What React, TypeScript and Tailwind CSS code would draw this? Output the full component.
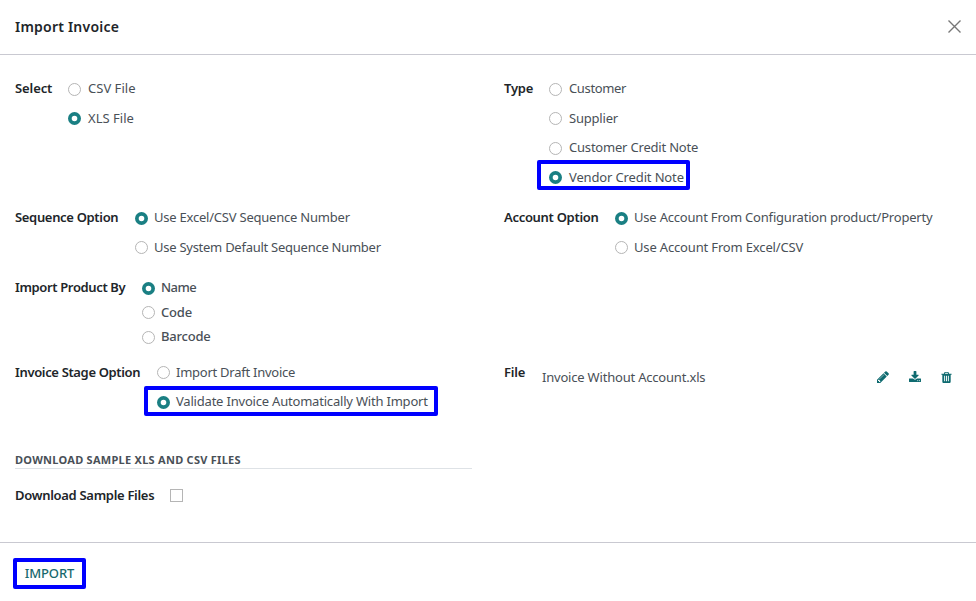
import React from "react";

type Option = { text: string; h: string; on?: boolean; low?: boolean; bold?: boolean; near?: boolean; mark?: string; track?: string };

function Radio({ text, h, on, low, bold, near, mark, track }: Option) {
  return (
    <div className={"relative flex items-start whitespace-nowrap " + h}>
      <span
        className={
          "block h-[13px] w-[13px] shrink-0 rounded-full bg-white " +
          (low ? "mt-[5px] " : "mt-[4px] ") +
          (on ? "shadow-[inset_0_0_0_3.7px_#1a7f83]" : "border border-[#b5b5b5]")
        }
      />
      <span className={(near ? "ml-[6px] " : "ml-[7px] ") + (bold ? "font-[550] " : "") + (track ?? "tracking-[-0.2px]")}>{text}</span>
      {mark && <span className={"absolute rounded-[2px] border-4 border-[#0000ff] " + mark} />}
    </div>
  );
}

function Field({ label, w, track, options }: { label: string; w: string; track?: string; options: Option[] }) {
  return (
    <div className="flex">
      <Label text={label} w={w} track={track} />
      <div>
        {options.map((o) => (
          <Radio key={o.text} {...o} />
        ))}
      </div>
    </div>
  );
}

function Label({ text, w, track }: { text: string; w: string; track?: string }) {
  return (
    <div className={"shrink-0 whitespace-nowrap font-semibold text-[#212529] " + w + " " + (track ?? "tracking-[-0.2px]")}>{text}</div>
  );
}

function Icon({ d, vb, w }: { d: string; vb: string; w: string }) {
  return (
    <svg viewBox={vb} className={"fill-[#0f6b70] " + w}>
      <path d={d} />
    </svg>
  );
}

const pencil =
  "M363 1536l91-91-235-235-91 91v107h128v128h107zm523-928q0-22-22-22-10 0-17 7l-542 542q-7 7-7 17 0 22 22 22 10 0 17-7l542-542q7-7 7-17zm-54-192l416 416-832 832h-416v-416zm683 96q0 53-37 90l-166 166-416-416 166-165q36-38 90-38 53 0 91 38l235 234q37 39 37 91z";
const download =
  "M1280 1344q0-26-19-45t-45-19-45 19-19 45 19 45 45 19 45-19 19-45zm256 0q0-26-19-45t-45-19-45 19-19 45 19 45 45 19 45-19 19-45zm128-224v320q0 40-28 68t-68 28h-1472q-40 0-68-28t-28-68v-320q0-40 28-68t68-28h465l135 136q58 56 136 56t136-56l136-136h464q40 0 68 28t28 68zm-325-569q17 41-14 70l-448 448q-18 19-45 19t-45-19l-448-448q-31-29-14-70 17-39 59-39h256v-448q0-26 19-45t45-19h256q26 0 45 19t19 45v448h256q42 0 59 39z";
const trash =
  "M512 1376v-704q0-14-9-23t-23-9h-64q-14 0-23 9t-9 23v704q0 14 9 23t23 9h64q14 0 23-9t9-23zm256 0v-704q0-14-9-23t-23-9h-64q-14 0-23 9t-9 23v704q0 14 9 23t23 9h64q14 0 23-9t9-23zm256 0v-704q0-14-9-23t-23-9h-64q-14 0-23 9t-9 23v704q0 14 9 23t23 9h64q14 0 23-9t9-23zm-544-992h448l-48-117q-7-9-17-11h-317q-10 2-17 11zm928 32v64q0 14-9 23t-23 9h-96v948q0 83-47 143.500t-113 60.500h-832q-66 0-113-58.500t-47-141.500v-952h-96q-14 0-23-9t-9-23v-64q0-14 9-23t23-9h309l70-167q15-37 54-63t79-26h320q40 0 79 26t54 63l70 167h309q14 0 23 9t9 23z";

export default function App() {
  return (
    <div className="flex h-[601px] w-[976px] flex-col overflow-hidden bg-white font-['Noto_Sans',sans-serif] text-[13px] leading-5 text-[#495057]">
      <header className="flex h-[55px] shrink-0 items-center justify-between border-b border-[#c9c9d1] px-[15px] pb-px">
        <h1 className="text-[14px] font-semibold tracking-[0.22px] text-[#212529]">Import Invoice</h1>
        <svg viewBox="0 0 13 13" className="h-[13px] w-[13px] stroke-[#777777]" strokeWidth="1.4" fill="none">
          <path d="M.5.5l12 12M12.500.5l-12 12" />
        </svg>
      </header>

      <main className="h-[487px] shrink-0 px-[15px] pt-[23px]">
        <div className="grid h-[129px] grid-cols-[489px_1fr]">
          <Field label="Select" w="w-[53px]" track="tracking-[-0.1px]" options={[
            { text: "CSV File", h: "h-[30px]", low: true, track: "tracking-[0.02px]" },
            { text: "XLS File", h: "h-[30px]", on: true, track: "tracking-[0.02px]" },
          ]} />
          <Field label="Type" w="w-[45px]" options={[
            { text: "Customer", h: "h-[30px]", low: true, track: "tracking-[-0.35px]" },
            { text: "Supplier", h: "h-[29px]" },
            { text: "Customer Credit Note", h: "h-[30px]", low: true },
            { text: "Vendor Credit Note", h: "h-[30px]", on: true, track: "tracking-[-0.14px]", mark: "-top-[7px] -left-[12px] h-[30px] w-[153px]" },
          ]} />
        </div>
        <div className="grid h-[70px] grid-cols-[489px_1fr]">
          <Field label="Sequence Option" w="w-[120px]" track="tracking-[-0.33px]" options={[
            { text: "Use Excel/CSV Sequence Number", h: "h-[30px]", on: true, low: true, near: true, track: "tracking-[-0.22px]" },
            { text: "Use System Default Sequence Number", h: "h-[30px]", near: true, track: "tracking-[-0.26px]" },
          ]} />
          <Field label="Account Option" w="w-[111px]" track="tracking-[-0.3px]" options={[
            { text: "Use Account From Configuration product/Property", h: "h-[30px]", on: true, low: true, near: true },
            { text: "Use Account From Excel/CSV", h: "h-[30px]", near: true, track: "tracking-[-0.16px]" },
          ]} />
        </div>
        <div className="h-[85px]">
          <Field label="Import Product By" w="w-[127px]" track="tracking-[-0.36px]" options={[
            { text: "Name", h: "h-[25px]", on: true, low: true, bold: true, near: true, track: "tracking-[-0.5px]" },
            { text: "Code", h: "h-[24px]", bold: true, near: true },
            { text: "Barcode", h: "h-[25px]", low: true, bold: true, near: true },
          ]} />
        </div>
        <div className="grid h-[88px] grid-cols-[489px_1fr]">
          <Field label="Invoice Stage Option" w="w-[142px]" track="tracking-[-0.35px]" options={[
            { text: "Import Draft Invoice", h: "h-[29px]", near: true, track: "tracking-[-0.25px]" },
            { text: "Validate Invoice Automatically With Import", h: "h-[30px]", on: true, low: true, near: true, mark: "-top-[5px] -left-[13px] h-[30px] w-[294px]" },
          ]} />
          <div className="flex">
            <Label text="File" w="w-[38px]" />
            <div className="flex h-[20px] flex-1 pt-[5px]">
              <span className="w-[335px] tracking-[-0.2px]">Invoice Without Account.xls</span>
              <div className="flex items-start gap-[20px] pt-[4px]">
                <Icon d={pencil} vb="0 128 1536 1664" w="h-[13px] w-[12px]" />
                <Icon d={download} vb="0 0 1664 1664" w="h-[12px] w-[12px]" />
                <Icon d={trash} vb="0 0 1408 1792" w="h-[13px] w-[11px]" />
              </div>
            </div>
          </div>
        </div>
        <h2 className="mb-[16px] h-[19px] w-[457px] border-b border-[#dee2e6] text-[11px] font-bold tracking-[0.07px]"><span className="tracking-[0.27px]">DOWNLOAD SAMPLE XLS AND CSV FILES</span></h2>
        <div className="flex">
          <Label text="Download Sample Files" w="w-[155px]" track="tracking-[-0.3px]" />
          <span className="mt-[4px] h-[13px] w-[13px] border border-[#b5b5b5]" />
        </div>
      </main>

      <footer className="flex h-[59px] shrink-0 items-start border-t border-[#c9c9d1] pt-[15px] pl-[13px]">
        <button className="flex h-[31px] w-[73px] items-center justify-center rounded-[2px] border-4 border-[#0000ff] pb-[2px] font-[550] tracking-[-0.1px] text-[#17696d]">IMPORT</button>
      </footer>
    </div>
  );
}
